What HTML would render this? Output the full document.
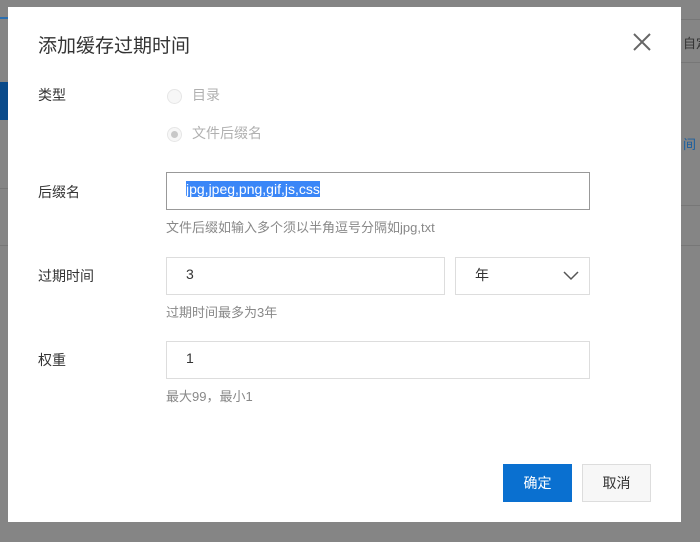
<!DOCTYPE html>
<html><head><meta charset="utf-8"><style>
*{margin:0;padding:0;box-sizing:border-box}
body{width:700px;height:542px;background:#858585;position:relative;overflow:hidden;font-family:"Liberation Sans","Noto Sans CJK SC",sans-serif;color:#333}
.bg{position:absolute;font-size:13px;white-space:nowrap}
.dlg{position:absolute;left:8px;top:7px;width:673px;height:515px;background:#fff}
.title{position:absolute;left:30px;top:24px;font-size:19px;color:#333}
.x{position:absolute;left:624px;top:25px}
.lbl{position:absolute;left:30px;font-size:14px;color:#333}
.radio{position:absolute;left:159px;width:15px;height:15px;border-radius:50%;border:1px solid #e6e6e6;background:#f7f7f7}
.rt{position:absolute;left:184px;font-size:14px;color:#b0b0b0}
.inp{position:absolute;border:1px solid #ddd;height:38px;font-size:14px;padding:8px 0 0 19px;color:#333}
.hint{position:absolute;left:158px;font-size:13px;color:#888}
.btn{position:absolute;top:457px;height:38px;width:69px;font-size:14px;text-align:center;line-height:38px}
</style></head><body>
<div class="bg" style="left:0;top:17px;width:8px;height:2px;background:#2b6fb0"></div>
<div class="bg" style="left:0;top:82px;width:8px;height:38px;background:#0a4a8a"></div>
<div class="bg" style="left:0;top:188px;width:8px;height:1px;background:#777"></div>
<div class="bg" style="left:0;top:245px;width:8px;height:1px;background:#777"></div>
<div class="bg" style="left:681px;top:19px;width:19px;height:1px;background:#777"></div>
<div class="bg" style="left:681px;top:62px;width:19px;height:1px;background:#777"></div>
<div class="bg" style="left:681px;top:205px;width:19px;height:1px;background:#777"></div>
<div class="bg" style="left:681px;top:245px;width:19px;height:1px;background:#777"></div>
<div class="bg" style="left:683px;top:33px;color:#333">自定</div>
<div class="bg" style="left:683px;top:134px;color:#1a5fa0">间</div>
<div class="dlg">
<div class="title">添加缓存过期时间</div>
<svg class="x" width="20" height="20" viewBox="0 0 20 20"><path d="M2 2L18 18M18 2L2 18" stroke="#666" stroke-width="2"/></svg>
<div class="lbl" style="top:78px">类型</div>
<div class="radio" style="top:82px"></div><div class="rt" style="top:78px">目录</div>
<div class="radio" style="top:120px"><div style="position:absolute;left:3px;top:3px;width:7px;height:7px;border-radius:50%;background:#c8c8c8"></div></div><div class="rt" style="top:116px">文件后缀名</div>
<div class="lbl" style="top:175px">后缀名</div>
<div class="inp" style="left:158px;top:165px;width:424px;border-color:#999;padding-left:19px"><span style="background:#3a86f7;color:#fff">jpg,jpeg,png,gif,js,css</span></div>
<div class="hint" style="top:210px">文件后缀如输入多个须以半角逗号分隔如jpg,txt</div>
<div class="lbl" style="top:259px">过期时间</div>
<div class="inp" style="left:158px;top:250px;width:279px">3</div>
<div class="inp" style="left:447px;top:250px;width:135px;padding-top:7px">年
<svg style="position:absolute;left:107px;top:13px" width="16" height="10" viewBox="0 0 16 10"><path d="M1 1L8 8L15 1" stroke="#555" stroke-width="1.5" fill="none"/></svg></div>
<div class="hint" style="top:295px">过期时间最多为3年</div>
<div class="lbl" style="top:343px">权重</div>
<div class="inp" style="left:158px;top:334px;width:424px">1</div>
<div class="hint" style="top:379px">最大99，最小1</div>
<div class="btn" style="left:495px;background:#0a70d0;color:#fff">确定</div>
<div class="btn" style="left:574px;background:#f7f7f7;border:1px solid #ddd;line-height:36px;color:#333">取消</div>
</div>
</body></html>
